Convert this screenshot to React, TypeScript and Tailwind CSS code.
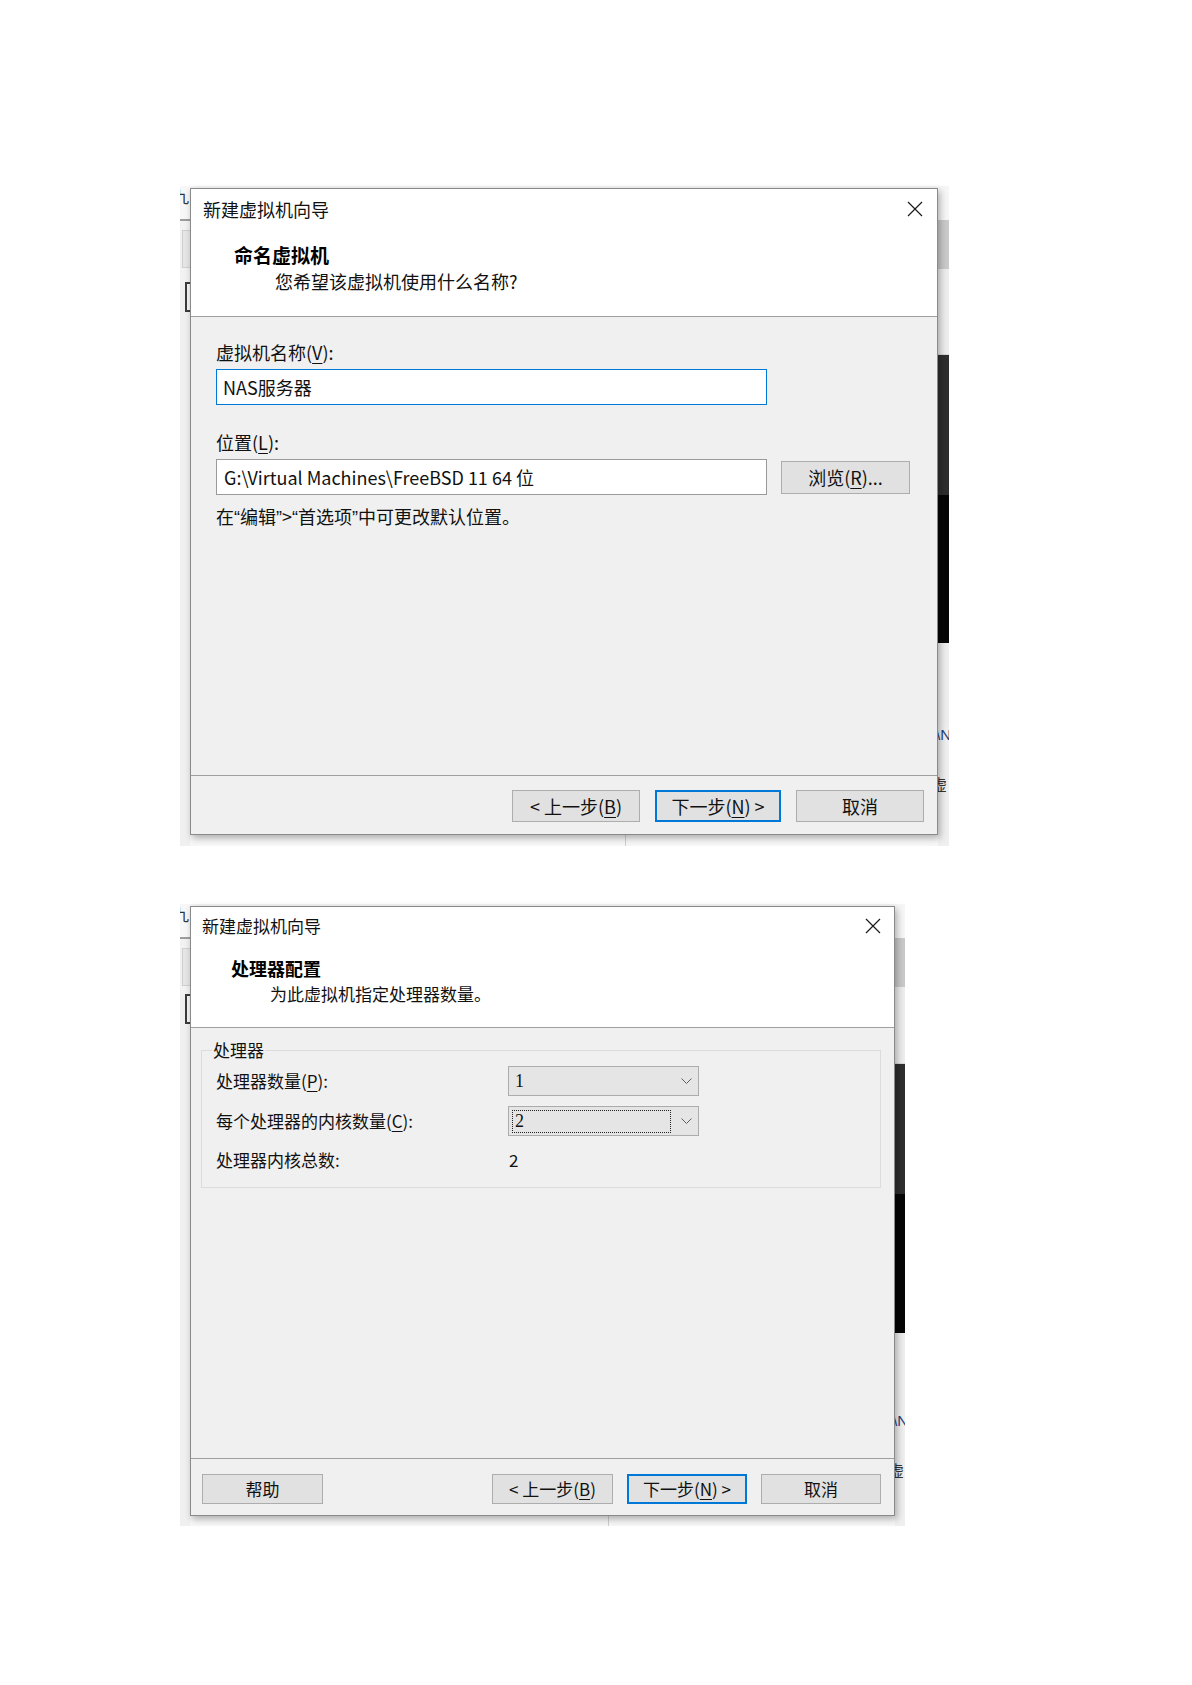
import React from 'react';

const cjk = "font-['Noto_Sans_CJK_SC',sans-serif]";

function CloseIcon() {
  return (
    <svg width="16" height="16" viewBox="0 0 16 16" fill="none" stroke="#1a1a1a" strokeWidth="1.2">
      <path d="M1 1L15 15M15 1L1 15" />
    </svg>
  );
}

function Chevron() {
  return (
    <svg width="11" height="7" viewBox="0 0 11 7" fill="none" stroke="#606060" strokeWidth="1">
      <polyline points="0.5,0.5 5.5,5.5 10.5,0.5" />
    </svg>
  );
}

function Key({ k }: { k: string }) {
  return <span className="underline underline-offset-[3px]">{k}</span>;
}

function Btn({
  children,
  className = '',
  primary = false,
}: {
  children: React.ReactNode;
  className?: string;
  primary?: boolean;
}) {
  return (
    <div
      className={
        'flex items-center justify-center bg-[#e1e1e1] text-[#111] ' +
        (primary ? 'border-2 border-[#0078d7] ' : 'border border-[#adadad] ') +
        className
      }
    >
      {children}
    </div>
  );
}

function Quote({ c }: { c: string }) {
  return <span className="font-['Liberation_Sans',sans-serif]">{c}</span>;
}

// left edge of the window behind the dialog
function LeftBackdrop({ bracketTop }: { bracketTop: string }) {
  return (
    <div className="w-[10px] flex flex-col overflow-hidden bg-[#f0f0f0]">
      <div className="h-[20px] bg-[#f7f7f7] overflow-hidden whitespace-nowrap">
        <span className={cjk + ' block -ml-[7px] text-[16px] leading-[20px] text-[#333]'}>九</span>
      </div>
      <div className="h-[13px] bg-[#f7f7f7]" />
      <div className="h-[2px] bg-[#9c9c9c]" />
      <div className="h-[9px] bg-[#f2f2f2]" />
      <div className="h-[38px] ml-[2px] bg-[#e6e6e6] border-y border-l border-[#cfcfcf]" />
      <div className={bracketTop + ' bg-[#f2f2f2]'} />
      <div className="h-[30px] ml-[5px] border-l-2 border-y-2 border-[#3b3b3b] bg-[#f5f5f5]" />
      <div className="flex-1 bg-[#f0f0f0]" />
    </div>
  );
}

// right edge of the window behind the dialog
function RightBackdrop({
  w,
  gapA,
  darkA,
  darkB,
  gapB,
}: {
  w: string;
  gapA: string;
  darkA: string;
  darkB: string;
  gapB: string;
}) {
  return (
    <div className={w + ' flex flex-col overflow-hidden bg-[#efefef]'}>
      <div className="h-[34px] bg-[#f6f6f6]" />
      <div className="h-[49px] bg-[#cacaca]" />
      <div className={gapA + ' bg-[#ededed] border-b border-[#d6d6d6]'} />
      <div className={darkA + ' bg-[#2e2e2e]'} />
      <div className={darkB + ' bg-[#060606]'} />
      <div className={gapB + ' bg-[#eeeeee]'} />
      <div className="h-[22px] overflow-hidden whitespace-nowrap">
        <span className="block -ml-[2px] font-['Liberation_Sans',sans-serif] text-[15px] leading-[22px] text-[#23407e]">\N</span>
      </div>
      <div className="h-[27px]" />
      <div className="h-[22px] overflow-hidden whitespace-nowrap">
        <span className={cjk + ' block -ml-[7px] text-[16px] leading-[22px] text-[#333]'}>虚</span>
      </div>
      <div className="flex-1" />
    </div>
  );
}

function NameDialog() {
  return (
    <div className={'w-[769px] h-[660px] flex bg-[#f0f0f0] ' + cjk}>
      <LeftBackdrop bracketTop="h-[14px]" />
      <div className="w-[748px] flex flex-col">
        <div className="h-[2px] bg-[#f4f4f4]" />
        <div className="relative z-10 h-[647px] flex flex-col border border-[#8a8a8a] bg-[#f0f0f0] shadow-[2px_3px_7px_rgba(0,0,0,0.3)]">
          <div className="h-[128px] bg-white border-b border-[#a0a0a0]">
            <div className="h-[40px] flex items-center justify-between pl-[12px] pr-[14px]">
              <span className="text-[18px] text-[#111]">新建虚拟机向导</span>
              <CloseIcon />
            </div>
            <div className="pt-[13px] pl-[43px] text-[19px] leading-[26px] font-bold text-black">命名虚拟机</div>
            <div className="pl-[84px] text-[18px] leading-[26px] text-[#111]">您希望该虚拟机使用什么名称?</div>
          </div>
          <div className="flex-1 flex flex-col px-[25px] pt-[23px] text-[18px] text-[#111]">
            <div className="leading-[24px]">
              虚拟机名称(<Key k="V" />):
            </div>
            <div className="mt-[5px] w-[551px] h-[36px] flex items-center pl-[6px] border border-[#0078d7] bg-white leading-none">
              NAS服务器
            </div>
            <div className="mt-[25px] leading-[24px]">
              位置(<Key k="L" />):
            </div>
            <div className="mt-[5px] flex items-center">
              <div className="w-[551px] h-[36px] flex items-center pl-[7px] border border-[#9a9a9a] bg-white leading-none whitespace-nowrap">
                G:\Virtual Machines\FreeBSD 11 64 位
              </div>
              <Btn className="ml-[14px] w-[129px] h-[33px]">
                浏览(<Key k="R" />)...
              </Btn>
            </div>
            <div className="mt-[9px] leading-[24px]">
              在<Quote c="“" />编辑<Quote c="”" />&gt;<Quote c="“" />首选项<Quote c="”" />中可更改默认位置。
            </div>
          </div>
          <div className="h-[59px] border-t border-[#a0a0a0] flex justify-end gap-[15px] pr-[13px] pt-[14px] text-[18px]">
            <Btn className="w-[128px] h-[32px]">
              &lt; 上一步(<Key k="B" />)
            </Btn>
            <Btn primary className="w-[126px] h-[32px]">
              下一步(<Key k="N" />) &gt;
            </Btn>
            <Btn className="w-[128px] h-[32px]">取消</Btn>
          </div>
        </div>
        <div className="flex-1 bg-[#f7f7f7] flex">
          <div className="ml-[435px] w-px bg-[#cfcfcf]" />
        </div>
      </div>
      <RightBackdrop w="w-[11px]" gapA="h-[86px]" darkA="h-[140px]" darkB="h-[148px]" gapB="h-[81px]" />
    </div>
  );
}

function Select({ value, focused = false }: { value: string; focused?: boolean }) {
  return (
    <div className="w-[191px] h-[30px] flex items-center border border-[#acacac] bg-[#e5e5e5]">
      <div
        className={
          'ml-[3px] w-[159px] h-[23px] flex items-center pl-[2px] font-["Liberation_Serif",serif] text-[18px] leading-none ' +
          (focused ? 'border border-dotted border-[#222]' : 'border border-transparent')
        }
      >
        {value}
      </div>
      <div className="flex-1 flex justify-end pr-[6px]">
        <Chevron />
      </div>
    </div>
  );
}

function CpuDialog() {
  return (
    <div className={'w-[725px] h-[622px] flex bg-[#f0f0f0] ' + cjk}>
      <LeftBackdrop bracketTop="h-[8px]" />
      <div className="w-[706px] flex flex-col">
        <div className="h-[2px] bg-[#f4f4f4]" />
        <div className="relative z-10 h-[610px] flex flex-col border border-[#8a8a8a] bg-[#f0f0f0] shadow-[2px_3px_7px_rgba(0,0,0,0.3)]">
          <div className="h-[121px] bg-white border-b border-[#a0a0a0]">
            <div className="h-[38px] flex items-center justify-between pl-[11px] pr-[13px]">
              <span className="text-[17px] text-[#111]">新建虚拟机向导</span>
              <CloseIcon />
            </div>
            <div className="pt-[11px] pl-[40px] text-[18px] leading-[25px] font-bold text-black">处理器配置</div>
            <div className="pl-[79px] text-[17px] leading-[25px] text-[#111]">为此虚拟机指定处理器数量。</div>
          </div>
          <div className="flex-1 pt-[11px] text-[17px] text-[#111]">
            <fieldset className="ml-[10px] mr-[13px] border border-[#dcdcdc] pb-[12px]">
              <legend className="ml-[10px] px-[1px] leading-[22px]">处理器</legend>
              <div className="mt-[5px] flex items-center h-[30px] pl-[14px]">
                <div className="w-[292px]">
                  处理器数量(<Key k="P" />):
                </div>
                <Select value="1" />
              </div>
              <div className="mt-[10px] flex items-center h-[30px] pl-[14px]">
                <div className="w-[292px]">
                  每个处理器的内核数量(<Key k="C" />):
                </div>
                <Select value="2" focused />
              </div>
              <div className="mt-[9px] flex items-center h-[30px] pl-[14px]">
                <div className="w-[292px]">处理器内核总数:</div>
                <div className="pl-[1px]">2</div>
              </div>
            </fieldset>
          </div>
          <div className="h-[57px] border-t border-[#a0a0a0] flex pl-[11px] pr-[13px] pt-[15px] text-[17px]">
            <Btn className="w-[121px] h-[30px]">帮助</Btn>
            <div className="ml-auto flex gap-[14px]">
              <Btn className="w-[121px] h-[30px]">
                &lt; 上一步(<Key k="B" />)
              </Btn>
              <Btn primary className="w-[120px] h-[30px]">
                下一步(<Key k="N" />) &gt;
              </Btn>
              <Btn className="w-[120px] h-[30px]">取消</Btn>
            </div>
          </div>
        </div>
        <div className="flex-1 bg-[#f7f7f7] flex">
          <div className="ml-[418px] w-px bg-[#cfcfcf]" />
        </div>
      </div>
      <RightBackdrop w="w-[10px]" gapA="h-[77px]" darkA="h-[130px]" darkB="h-[139px]" gapB="h-[77px]" />
    </div>
  );
}

export default function App() {
  return (
    <div className="w-[1192px] h-[1685px] bg-white pl-[180px] pt-[186px] flex flex-col gap-[58px]">
      <NameDialog />
      <CpuDialog />
    </div>
  );
}
